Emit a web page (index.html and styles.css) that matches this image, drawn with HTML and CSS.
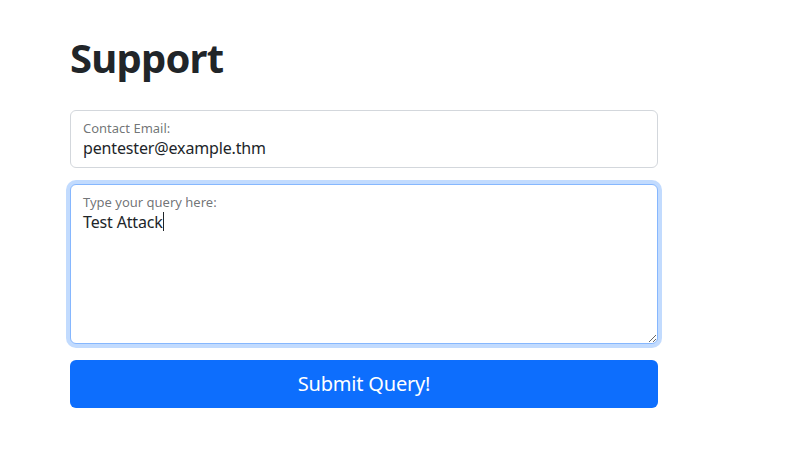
FILE: index.html
```html
<!DOCTYPE html>
<html lang="en">
<head>
<meta charset="utf-8">
<title>Support</title>
<link rel="stylesheet" href="styles.css">
</head>
<body>
<main class="container">
  <h1 class="title">Support</h1>
  <form class="form">
    <div class="floating">
      <input class="field" type="email" id="email" value="pentester@example.thm">
      <label class="float-label" for="email">Contact Email:</label>
    </div>
    <div class="floating">
      <textarea class="field area is-focused" id="query">Test Attack</textarea>
      <label class="float-label" for="query">Type your query here:</label>
      <span class="caret"></span>
    </div>
    <button type="button" class="submit">Submit Query!</button>
  </form>
</main>
</body>
</html>
```

FILE: styles.css
```css
* { box-sizing: border-box; }
html, body { margin: 0; background: #fff; }
body {
  font-family: "Noto Sans", "Open Sans", sans-serif;
  color: #212529;
  font-size: 16px;
  line-height: 1.5;
}
.container {
  width: 588px;
  margin-left: 70px;
  padding-top: 34px;
}
.title {
  margin: 0 0 28px;
  font-size: 40px;
  line-height: 48px;
  font-weight: 700;
  letter-spacing: -0.8px;
}
.form { display: flex; flex-direction: column; gap: 16px; }
.floating { position: relative; }
.field {
  display: block;
  width: 100%;
  height: 58px;
  padding: 25px 12px 8px;
  font: inherit;
  font-size: 16px;
  line-height: 24px;
  letter-spacing: -0.15px;
  color: #212529;
  background: #fff;
  border: 1px solid #d3d7dc;
  border-radius: 6px;
  outline: none;
}
.area { height: 160px; resize: vertical; }
.is-focused {
  border-color: #86b7fe;
  box-shadow: 0 0 0 4px rgba(13, 110, 253, 0.25);
}
.float-label {
  position: absolute;
  left: 13px;
  top: 9px;
  font-size: 13px;
  line-height: 18px;
  color: rgba(33, 37, 41, 0.65);
  pointer-events: none;
}
.caret {
  position: absolute;
  left: 93px;
  top: 28px;
  width: 1px;
  height: 19px;
  background: #212529;
}
.submit {
  height: 48px;
  width: 100%;
  border: 0;
  border-radius: 6px;
  background: #0d6efd;
  color: #fff;
  font: inherit;
  font-size: 20px;
  line-height: 30px;
  letter-spacing: -0.2px;
}
```
